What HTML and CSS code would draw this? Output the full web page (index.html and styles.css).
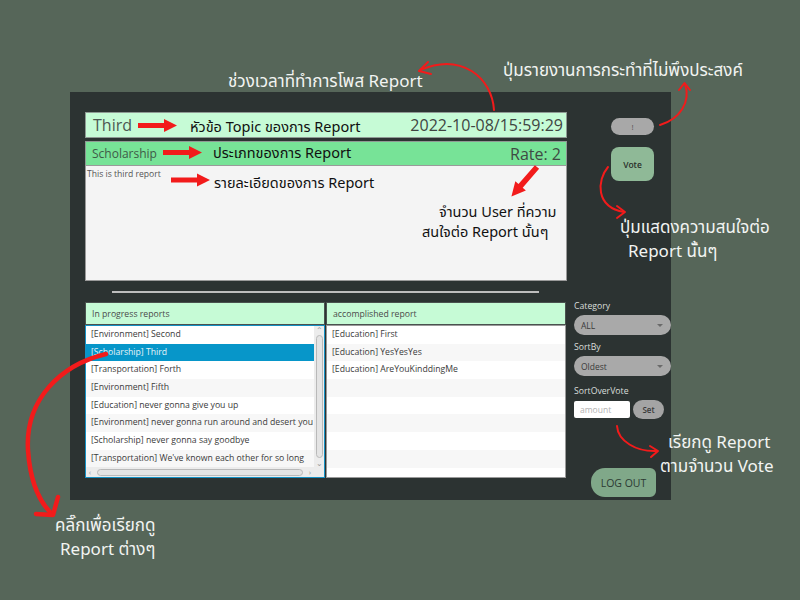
FILE: index.html
```html
<!DOCTYPE html>
<html>
<head>
<meta charset="utf-8">
<link rel="stylesheet" href="styles.css">
</head>
<body>
<div class="app">
  <div class="main">
    <div class="topic">
      <span class="topic-title">Third</span>
      <span class="topic-date">2022-10-08/15:59:29</span>
    </div>
    <div class="category">
      <span class="cat-name">Scholarship</span>
      <span class="rate">Rate: 2</span>
    </div>
    <div class="detail">This is third report</div>
    <div class="sep"></div>
    <div class="lists">
      <div class="list">
        <div class="list-head">In progress reports</div>
        <div class="list-body focused">
          <div class="rows">
            <div class="row">[Environment] Second</div>
            <div class="row selected">[Scholarship] Third</div>
            <div class="row">[Transportation] Forth</div>
            <div class="row">[Environment] Fifth</div>
            <div class="row">[Education] never gonna give you up</div>
            <div class="row">[Environment] never gonna run around and desert you</div>
            <div class="row">[Scholarship] never gonna say goodbye</div>
            <div class="row">[Transportation] We've known each other for so long</div>
          </div>
          <div class="vscroll">
            <span class="sarrow">&#8963;</span>
            <div class="vthumb"></div>
            <span class="sarrow">&#8964;</span>
          </div>
          <div class="hscroll">
            <span class="sarrow">&#8249;</span>
            <div class="hthumb"></div>
            <span class="sarrow">&#8250;</span>
          </div>
          <div class="corner"></div>
        </div>
      </div>
      <div class="list">
        <div class="list-head">accomplished report</div>
        <div class="list-body plain">
          <div class="row">[Education] First</div>
          <div class="row">[Education] YesYesYes</div>
          <div class="row">[Education] AreYouKinddingMe</div>
          <div class="row"></div>
          <div class="row"></div>
          <div class="row"></div>
          <div class="row"></div>
          <div class="row"></div>
          <div class="row"></div>
        </div>
      </div>
    </div>
  </div>
  <div class="side">
    <button class="flag">!</button>
    <button class="vote">Vote</button>
    <div class="field-label first">Category</div>
    <div class="combo">ALL<span class="caret"></span></div>
    <div class="field-label">SortBy</div>
    <div class="combo">Oldest<span class="caret"></span></div>
    <div class="field-label gap">SortOverVote</div>
    <div class="vote-row">
      <input class="amount" type="text" placeholder="amount">
      <button class="set">Set</button>
    </div>
    <button class="logout">LOG OUT</button>
  </div>
</div>

<div class="note white n-time">ช่วงเวลาที่ทำการโพส Report</div>
<div class="note white n-flag">ปุ่มรายงานการกระทำที่ไม่พึงประสงค์</div>
<div class="note white n-vote1">ปุ่มแสดงความสนใจต่อ</div>
<div class="note white n-vote2">Report นั้นๆ</div>
<div class="note white n-sort1">เรียกดู Report</div>
<div class="note white n-sort2">ตามจำนวน Vote</div>
<div class="note white n-click1">คลิ๊กเพื่อเรียกดู</div>
<div class="note white n-click2">Report ต่างๆ</div>
<div class="note dark n-topic">หัวข้อ Topic ของการ Report</div>
<div class="note dark n-type">ประเภทของการ Report</div>
<div class="note dark n-detail">รายละเอียดของการ Report</div>
<div class="note dark n-user1">จำนวน User ที่ความ</div>
<div class="note dark n-user2">สนใจต่อ Report นั้นๆ</div>

<svg class="arrows" width="800" height="600" viewBox="0 0 800 600">
  <g fill="#f21b1b">
    <polygon points="138,123 164,123 164,119 177,125.5 164,132 164,128 138,128"/>
    <polygon points="163,150 189,150 189,146 202,152.5 189,159 189,155 163,155"/>
    <polygon points="171,177.5 197,177.5 197,173.5 210,180 197,186.5 197,182.5 171,182.5"/>
    <g transform="translate(537,167) rotate(131)">
      <polygon points="0,-2.8 25,-2.8 25,-7 39,0 25,7 25,2.8 0,2.8"/>
    </g>
  </g>
  <g fill="none" stroke="#f21b1b" stroke-width="2" stroke-linecap="round" stroke-linejoin="round">
    <path d="M494,110 C492,78 462,52 420,70"/>
    <path d="M428,62 L419,71 L431,74"/>
    <path d="M660,125 C680,119 691,102 685,84"/>
    <path d="M679,90 L684.5,83 L690,90"/>
    <path d="M608,167 C597,180 595,207 624,212"/>
    <path d="M617,206 L625,212 L617,218"/>
    <path d="M617,426 C618,441 636,452 657,451"/>
    <path d="M650,446 L658,451 L651,457"/>
  </g>
  <g fill="none" stroke="#f21b1b" stroke-width="4.5" stroke-linecap="round" stroke-linejoin="round">
    <path d="M106,354 C60,365 25,400 28,450 C30,480 38,500 51,513"/>
    <path d="M36,514 L53,515 L58,497"/>
  </g>
</svg>
</body>
</html>
```

FILE: styles.css
```css
html, body {
  margin: 0;
  padding: 0;
}
body {
  width: 800px;
  height: 600px;
  background: #566659;
  font-family: "Open Sans", "Noto Sans", sans-serif;
  position: relative;
  overflow: hidden;
}
.app {
  margin: 92px 0 0 70px;
  width: 601px;
  height: 408px;
  background: #2c3332;
  box-sizing: border-box;
  padding: 20px 0 0 15px;
  display: flex;
  overflow: hidden;
}
.main {
  width: 482px;
  display: flex;
  flex-direction: column;
}
.topic {
  height: 26px;
  box-sizing: border-box;
  background: #c6fbd6;
  border: 1px solid #8f9a94;
  display: flex;
  justify-content: space-between;
  align-items: center;
  padding: 0 3px 0 7px;
}
.topic-title {
  font-size: 16px;
  color: #4d5752;
}
.topic-date {
  font-size: 16px;
  color: #3f4542;
}
.category {
  margin-top: 3px;
  height: 24px;
  box-sizing: border-box;
  background: #77e397;
  border: 1px solid #8f9a94;
  border-bottom: none;
  display: flex;
  justify-content: space-between;
  align-items: center;
  padding: 0 5px 0 6px;
}
.cat-name {
  font-size: 12px;
  color: #3f5a48;
}
.rate {
  font-size: 16px;
  color: #3f4a44;
}
.detail {
  height: 116px;
  box-sizing: border-box;
  background: #f4f4f4;
  border: 1px solid #9a9a9a;
  font-size: 8.6px;
  line-height: 12px;
  color: #555;
  padding: 2px 0 0 1px;
}
.sep {
  margin: 10px 0 0 27px;
  width: 427px;
  height: 2px;
  background: #bdbdbd;
}
.lists {
  margin-top: 9px;
  display: flex;
  gap: 1px;
  height: 176px;
}
.list {
  width: 240px;
  display: flex;
  flex-direction: column;
}
.list-head {
  height: 23px;
  box-sizing: border-box;
  background: #c6fbd6;
  border: 1px solid #4a524f;
  font-size: 8.7px;
  color: #4a4a4a;
  padding-left: 6px;
  line-height: 22px;
}
.list-body {
  flex: 1;
  box-sizing: border-box;
  background: #fff;
  overflow: hidden;
}
.list-body.focused {
  border: 1px solid #1591c4;
  display: grid;
  grid-template-columns: 1fr 10px;
  grid-template-rows: 1fr 10px;
}
.list-body.plain {
  border: 1px solid #9a9a9a;
}
.rows {
  overflow: hidden;
}
.row {
  height: 17.7px;
  line-height: 17.7px;
  font-size: 8.7px;
  color: #3b3b3b;
  padding-left: 5px;
  white-space: nowrap;
  overflow: hidden;
}
.row:nth-child(even) {
  background: #f7f7f7;
}
.row.selected {
  background: #0796c9;
  color: #e8f4f8;
}
.vscroll {
  background: #ececec;
  display: flex;
  flex-direction: column;
  align-items: center;
}
.hscroll {
  background: #ececec;
  display: flex;
  align-items: center;
}
.corner {
  background: #ececec;
}
.sarrow {
  font-size: 8px;
  line-height: 8px;
  color: #9a9a9a;
  width: 8px;
  height: 8px;
  text-align: center;
}
.vthumb {
  flex: 1;
  width: 7px;
  margin: 1px 0;
  background: #e4e4e4;
  border: 1px solid #b9b9b9;
  border-radius: 4px;
  box-sizing: border-box;
}
.hthumb {
  flex: 1;
  height: 7px;
  margin: 0 3px;
  background: #e4e4e4;
  border: 1px solid #b9b9b9;
  border-radius: 4px;
  box-sizing: border-box;
}
.side {
  margin-left: 7px;
  width: 97px;
  display: flex;
  flex-direction: column;
  align-items: flex-start;
  padding-top: 6px;
}
button {
  font-family: "Open Sans", sans-serif;
  border: none;
  padding: 0;
  margin: 0;
}
.flag {
  margin-left: 37px;
  width: 43px;
  height: 17px;
  border-radius: 9px;
  background: #a8a8a8;
  font-size: 8px;
  color: #555;
}
.vote {
  margin: 12px 0 0 37px;
  width: 43px;
  height: 34px;
  border-radius: 8px;
  background: #8fb997;
  font-size: 8.5px;
  font-weight: 600;
  color: #2a2f2b;
}
.field-label {
  font-size: 8.7px;
  line-height: 13px;
  height: 13px;
  color: #d9dedb;
  margin-top: 6px;
  margin-bottom: 2px;
}
.field-label.first {
  margin-top: 119px;
}
.field-label.gap {
  margin-top: 9px;
}
.combo {
  width: 97px;
  height: 20px;
  box-sizing: border-box;
  border-radius: 10px;
  background: #a9a9a9;
  display: flex;
  align-items: center;
  padding-left: 7px;
  font-size: 8.5px;
  color: #3a3a3a;
  position: relative;
}
.caret {
  position: absolute;
  right: 8px;
  top: 9px;
  border-left: 3px solid transparent;
  border-right: 3px solid transparent;
  border-top: 3px solid #6a6a6a;
}
.vote-row {
  display: flex;
  align-items: center;
  gap: 3px;
  height: 19px;
}
.amount {
  width: 56px;
  height: 17px;
  box-sizing: border-box;
  border: none;
  border-radius: 2px;
  background: #fff;
  padding: 0 0 0 6px;
  font-family: "Open Sans", sans-serif;
  font-size: 8.5px;
  outline: none;
}
.amount::placeholder {
  color: #b2b2b2;
}
.set {
  width: 31px;
  height: 19px;
  border-radius: 10px;
  background: #a4a4a4;
  font-size: 8px;
  font-weight: 600;
  color: #3a3a3a;
}
.logout {
  margin: 49px 0 0 17px;
  width: 65px;
  height: 29px;
  border-radius: 14px 6px 6px 14px;
  background: #80a889;
  font-size: 10.5px;
  color: #2c3a33;
}
.note {
  position: absolute;
  white-space: nowrap;
  font-family: "Noto Sans", "Noto Sans Thai", "Open Sans", sans-serif;
  line-height: 20px;
}
.note.white {
  color: #f2f4f2;
  font-size: 17px;
}
.note.dark {
  color: #111;
  font-size: 14.5px;
}
.n-time { left: 228px; top: 71px; }
.n-flag { left: 503px; top: 60px; }
.n-vote1 { left: 620px; top: 217px; }
.n-vote2 { left: 628px; top: 241px; }
.n-sort1 { left: 668px; top: 432px; }
.n-sort2 { left: 660px; top: 456px; }
.n-click1 { left: 55px; top: 515px; }
.n-click2 { left: 60px; top: 539px; }
.n-topic { left: 190px; top: 116px; }
.n-type { left: 213px; top: 142px; }
.n-detail { left: 214px; top: 172px; }
.n-user1 { left: 439px; top: 201px; }
.n-user2 { left: 422px; top: 221px; }
.arrows {
  position: absolute;
  left: 0;
  top: 0;
  pointer-events: none;
}
```
